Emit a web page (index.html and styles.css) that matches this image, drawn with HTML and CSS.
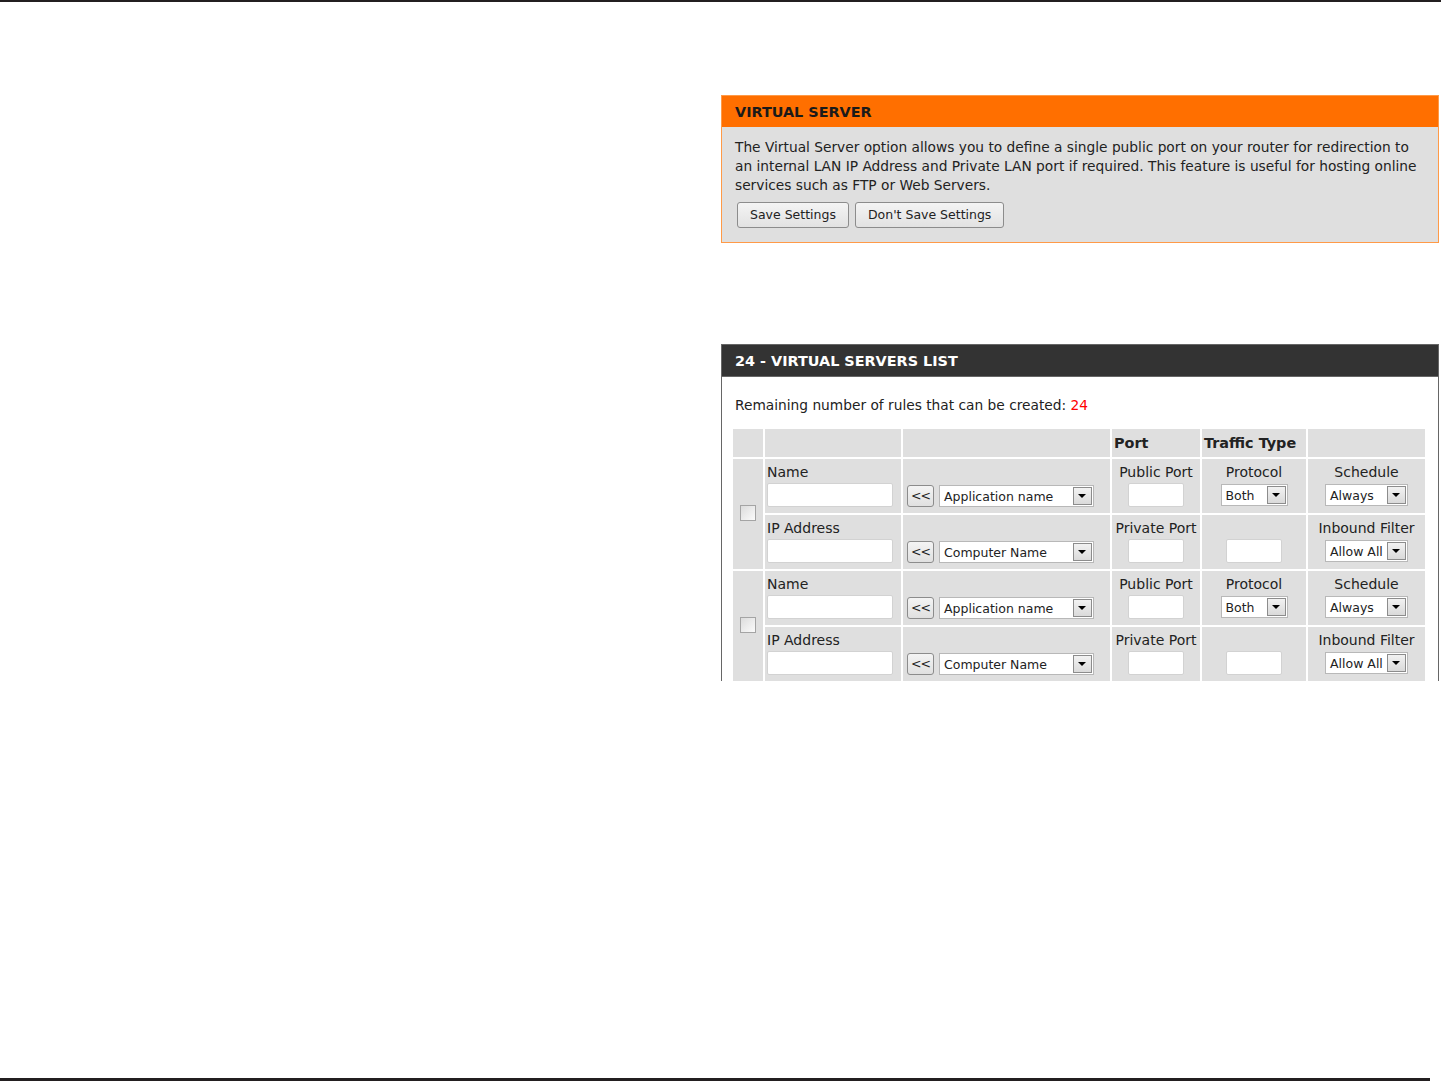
FILE: index.html
```html
<!DOCTYPE html>
<html lang="en">
<head>
    <meta charset="UTF-8">
    <title>Virtual Server</title>
    <link rel="stylesheet" href="styles.css">
</head>
<body>

    <div class="rule-top"></div>

    <div class="page">
        <div class="left-col"></div>

        <div class="right-col">
            <!-- Intro box -->
            <div class="box box-orange">
                <h2 class="box-title">VIRTUAL SERVER</h2>
                <div class="box-body">
                    <p class="intro">The Virtual Server option allows you to define a single public port on your router for redirection to an internal LAN IP Address and Private LAN port if required. This feature is useful for hosting online services such as FTP or Web Servers.</p>
                    <div class="actions">
                        <span class="btn">Save Settings</span>
                        <span class="btn">Don't Save Settings</span>
                    </div>
                </div>
            </div>

            <!-- Rules list -->
            <div class="box box-dark">
                <h2 class="box-title">24 - VIRTUAL SERVERS LIST</h2>
                <div class="box-body">
                    <p class="remaining">Remaining number of rules that can be created: <span class="red">24</span></p>

                    <table class="rules">
                        <colgroup>
                            <col class="c-check">
                            <col class="c-name">
                            <col class="c-pick">
                            <col class="c-port">
                            <col class="c-traffic">
                            <col class="c-sched">
                        </colgroup>
                        <tr class="head">
                            <td></td>
                            <td></td>
                            <td></td>
                            <td>Port</td>
                            <td>Traffic Type</td>
                            <td></td>
                        </tr>

                        <tr>
                            <td rowspan="2" class="check-cell"><span class="checkbox"></span></td>
                            <td><div class="lbl">Name</div><span class="field field-name"></span></td>
                            <td><div class="lbl">&nbsp;</div><div class="pick"><span class="small-btn">&lt;&lt;</span><span class="select sel-wide"><span>Application name</span><i class="arrow"></i></span></div></td>
                            <td class="center"><div class="lbl">Public Port</div><span class="field field-port"></span></td>
                            <td class="center"><div class="lbl">Protocol</div><span class="select sel-proto"><span>Both</span><i class="arrow"></i></span></td>
                            <td class="center"><div class="lbl">Schedule</div><span class="select sel-sched"><span>Always</span><i class="arrow"></i></span></td>
                        </tr>
                        <tr>
                            <td><div class="lbl">IP Address</div><span class="field field-name"></span></td>
                            <td><div class="lbl">&nbsp;</div><div class="pick"><span class="small-btn">&lt;&lt;</span><span class="select sel-wide"><span>Computer Name</span><i class="arrow"></i></span></div></td>
                            <td class="center"><div class="lbl">Private Port</div><span class="field field-port"></span></td>
                            <td class="center"><div class="lbl">&nbsp;</div><span class="field field-port"></span></td>
                            <td class="center"><div class="lbl">Inbound Filter</div><span class="select sel-sched"><span>Allow All</span><i class="arrow"></i></span></td>
                        </tr>

                        <tr>
                            <td rowspan="2" class="check-cell"><span class="checkbox"></span></td>
                            <td><div class="lbl">Name</div><span class="field field-name"></span></td>
                            <td><div class="lbl">&nbsp;</div><div class="pick"><span class="small-btn">&lt;&lt;</span><span class="select sel-wide"><span>Application name</span><i class="arrow"></i></span></div></td>
                            <td class="center"><div class="lbl">Public Port</div><span class="field field-port"></span></td>
                            <td class="center"><div class="lbl">Protocol</div><span class="select sel-proto"><span>Both</span><i class="arrow"></i></span></td>
                            <td class="center"><div class="lbl">Schedule</div><span class="select sel-sched"><span>Always</span><i class="arrow"></i></span></td>
                        </tr>
                        <tr>
                            <td><div class="lbl">IP Address</div><span class="field field-name"></span></td>
                            <td><div class="lbl">&nbsp;</div><div class="pick"><span class="small-btn">&lt;&lt;</span><span class="select sel-wide"><span>Computer Name</span><i class="arrow"></i></span></div></td>
                            <td class="center"><div class="lbl">Private Port</div><span class="field field-port"></span></td>
                            <td class="center"><div class="lbl">&nbsp;</div><span class="field field-port"></span></td>
                            <td class="center"><div class="lbl">Inbound Filter</div><span class="select sel-sched"><span>Allow All</span><i class="arrow"></i></span></td>
                        </tr>
                    </table>
                </div>
            </div>
        </div>
    </div>

    <div class="rule-bottom"></div>

</body>
</html>
```

FILE: styles.css
```css
html, body {
    margin: 0;
    padding: 0;
    background: #fff;
}
body {
    font-family: "DejaVu Sans", Verdana, sans-serif;
    font-size: 14px;
    color: #222;
    height: 1081px;
    display: flex;
    flex-direction: column;
    overflow: hidden;
}
.rule-top {
    height: 2px;
    background: #231f20;
}
.rule-bottom {
    height: 3px;
    width: 1430px;
    background: #231f20;
}
.page {
    flex: 1;
    display: grid;
    grid-template-columns: 721px 718px;
}
.right-col {
    padding-top: 93px;
}

/* Boxes */
.box {
    box-sizing: border-box;
}
.box-title {
    margin: 0;
    font-size: 14.4px;
    font-weight: bold;
    height: 31px;
    line-height: 33px;
    padding-left: 13px;
}
.box-orange {
    border: 1px solid #ff9a47;
    background: #dfdfdf;
    height: 148px;
}
.box-orange .box-title {
    background: #ff6f00;
    color: #1a1a1a;
}
.box-orange .box-body {
    padding: 11px 13px 0;
}
.intro {
    margin: 0;
    line-height: 19px;
    font-size: 13.75px;
}
.actions {
    display: flex;
    gap: 6px;
    margin-top: 7px;
    padding-left: 2px;
}
.btn {
    display: inline-block;
    height: 24px;
    line-height: 24px;
    padding: 0 12px;
    border: 1px solid #8c8c8c;
    border-radius: 3px;
    background: linear-gradient(#f4f4f4, #e2e2e2);
    font-size: 12.5px;
}

.box-dark {
    margin-top: 101px;
    border: 1px solid #666;
    border-bottom: none;
    background: #fff;
    height: 337px;
    overflow: hidden;
}
.box-dark .box-title {
    background: #333333;
    color: #fff;
    border-bottom: 1px solid #666;
}
.box-dark .box-body {
    padding: 0 0 0 10px;
}
.remaining {
    margin: 0;
    padding: 20px 0 0 3px;
    height: 30px;
    font-size: 13.75px;
}
.red {
    color: #f00;
}

/* Rules table */
.rules {
    width: 696px;
    table-layout: fixed;
    border-spacing: 2px;
    margin-left: -1px;
}
.c-check { width: 30px; }
.c-name { width: 136px; }
.c-pick { width: 207px; }
.c-port { width: 88px; }
.c-traffic { width: 104px; }
.c-sched { width: 117px; }
.rules td {
    background: #dfdfdf;
    vertical-align: top;
    padding: 4px 2px 6px 2px;
    height: 44px;
    box-sizing: content-box;
}
.rules .head td {
    height: 28px;
    padding: 0 2px;
    vertical-align: middle;
    font-weight: bold;
    font-size: 14.4px;
}
.rules td.center {
    text-align: center;
}
.rules td.check-cell {
    vertical-align: middle;
    text-align: center;
    padding: 0;
}
.lbl {
    height: 20px;
    line-height: 19px;
    white-space: nowrap;
}
.checkbox {
    display: inline-block;
    width: 14px;
    height: 14px;
    border: 1px solid #a4a4a4;
    background: linear-gradient(135deg, #dcdcdc, #fbfbfb);
    margin-top: 0;
}
.field {
    display: inline-block;
    box-sizing: border-box;
    height: 24px;
    background: #fff;
    border: 1px solid #d2d2d2;
    border-radius: 2px;
    vertical-align: top;
}
.field-name { width: 126px; }
.field-port { width: 56px; }

.pick {
    display: flex;
    align-items: center;
    gap: 5px;
    padding-left: 2px;
    margin-top: 1px;
}
.small-btn {
    display: inline-block;
    box-sizing: border-box;
    width: 27px;
    height: 22px;
    line-height: 20px;
    text-align: center;
    border: 1px solid #8c8c8c;
    border-radius: 3px;
    background: linear-gradient(#f4f4f4, #e0e0e0);
    font-size: 12.5px;
    letter-spacing: -1px;
}
.select {
    display: inline-flex;
    box-sizing: border-box;
    height: 22px;
    align-items: center;
    justify-content: space-between;
    background: #fff;
    border: 1px solid #b8b8b8;
    padding-left: 4px;
    text-align: left;
    font-size: 12.5px;
    white-space: nowrap;
    vertical-align: top;
    margin-top: 1px;
}
.sel-wide { width: 155px; }
.sel-proto { width: 67px; }
.sel-sched { width: 83px; }
.arrow {
    position: relative;
    display: inline-block;
    flex: none;
    box-sizing: border-box;
    width: 19px;
    height: 18px;
    margin-right: 1px;
    border: 1px solid #8c8c8c;
    background: linear-gradient(#f2f2f2, #dadada);
}
.arrow::after {
    content: "";
    position: absolute;
    left: 4px;
    top: 6px;
    border-left: 4px solid transparent;
    border-right: 4px solid transparent;
    border-top: 4px solid #000;
}
```
